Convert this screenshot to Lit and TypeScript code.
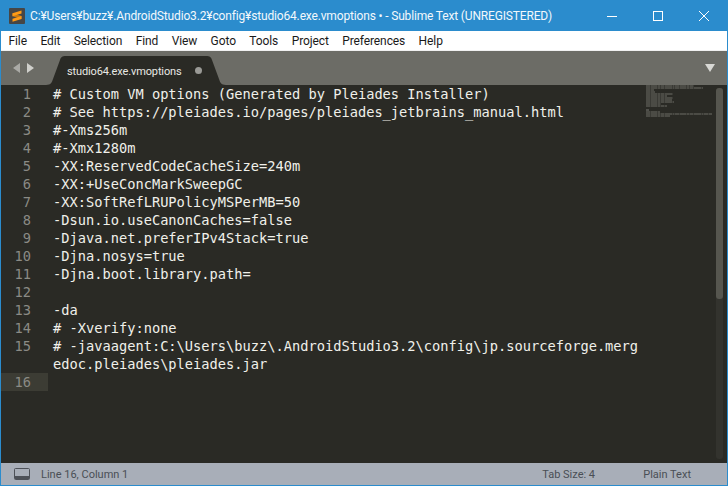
import { LitElement, html, css, svg } from "lit";
import { customElement } from "lit/decorators.js";

const LINES: [string, string[]][] = [
  ["1", ["# Custom VM options (Generated by Pleiades Installer)"]],
  ["2", ["# See https://pleiades.io/pages/pleiades_jetbrains_manual.html"]],
  ["3", ["#-Xms256m"]],
  ["4", ["#-Xmx1280m"]],
  ["5", ["-XX:ReservedCodeCacheSize=240m"]],
  ["6", ["-XX:+UseConcMarkSweepGC"]],
  ["7", ["-XX:SoftRefLRUPolicyMSPerMB=50"]],
  ["8", ["-Dsun.io.useCanonCaches=false"]],
  ["9", ["-Djava.net.preferIPv4Stack=true"]],
  ["10", ["-Djna.nosys=true"]],
  ["11", ["-Djna.boot.library.path="]],
  ["12", [""]],
  ["13", ["-da"]],
  ["14", ["# -Xverify:none"]],
  ["15", ["# -javaagent:C:\\Users\\buzz\\.AndroidStudio3.2\\config\\jp.sourceforge.merg", "edoc.pleiades\\pleiades.jar"]],
  ["16", [""]],
];

const MENU = ["File", "Edit", "Selection", "Find", "View", "Goto", "Tools", "Project", "Preferences", "Help"];

@customElement("app-root")
export class AppRoot extends LitElement {
  static styles = css`
    :host {
      display: block;
      width: 728px;
      height: 486px;
      box-sizing: border-box;
      border: 1px solid #2b8ccd;
      border-top: 0;
      background: #2a2a25;
      font-family: "Roboto", "Open Sans", sans-serif;
      overflow: hidden;
    }
    .frame { display: flex; flex-direction: column; height: 485px; }
    .title {
      height: 31px; flex: none; background: #2b8ccd; color: #f2f8fc;
      display: flex; align-items: center; font-size: 12px; margin: 0 -1px;
      padding-left: 9px; padding-right: 1px; box-sizing: border-box;
    }
    .logo { width: 16px; height: 16px; flex: none; margin-right: 5px; }
    .title-text { flex: 1; white-space: nowrap; letter-spacing: -0.16px; }
    .win { width: 46px; height: 31px; display: flex; align-items: center; justify-content: center; flex: none; }
    .menu {
      height: 19px; flex: none; background: #fff; color: #1a1a1a; font-size: 12px;
      display: flex; align-items: center; padding-left: 7.5px; gap: 13.45px; letter-spacing: -0.1px;
      border-bottom: 1px solid #f0f0f0;
    }
    .tabbar {
      height: 34px; flex: none; background: #6c6c66; display: flex; align-items: flex-end;
      position: relative;
    }
    .nav { position: absolute; left: 12px; top: 12px; }
    .tab {
      margin-left: 45px; width: 180px; height: 29px; position: relative;
      display: flex; align-items: center; color: #e8e8e4; font-size: 11px;
    }
    .tab-shape { position: absolute; inset: 0; }
    .tab-label { position: relative; margin-left: 21px; padding-top: 1px; letter-spacing: -0.13px; }
    .tab-dot { position: absolute; left: 149px; top: 11px; width: 7px; height: 7px; border-radius: 50%; background: #9a9a96; }
    .dropdown { position: absolute; right: 12px; top: 13px; }
    .editor { flex: 1; background: #2a2a25; position: relative; min-height: 0; }
    .row { display: flex; height: 18px; line-height: 18px; }
    .gutter {
      width: 47px; flex: none; box-sizing: border-box; padding-right: 17px; text-align: right;
      color: #8b8b85; font: 13.7px/18px "DejaVu Sans Mono", monospace;
    }
    .code {
      margin-left: 5px; color: #f0f0ea; white-space: pre;
      font: 13.7px/18px "DejaVu Sans Mono", monospace;
    }
    .row.active .gutter { background: #3c3c34; }
    .minimap { position: absolute; left: 644px; top: 0; }
    .sb-track { position: absolute; right: 4px; top: 3px; bottom: 4px; width: 7px; border-radius: 3px; background: #33332e; }
    .sb-thumb { width: 7px; height: 211px; border-radius: 3px; background: #56564f; }
    .status {
      height: 22px; flex: none; background: #a8aeb8; color: #4a4e55; font-size: 11px;
      display: flex; align-items: center; padding-left: 13px;
    }
    .status-icon { margin-right: 11px; flex: none; }
    .grow { flex: 1; }
    .tabsize { width: 101px; flex: none; }
    .syntax { flex: none; white-space: nowrap; margin-right: 36px; }
  `;

  private minimap() {
    const widths = [48, 57, 8, 9, 27, 21, 27, 26, 28, 15, 21, 0, 3, 14, 66, 24];
    const rows = widths.map((w, i) =>
      svg`<path d=${`M1 ${i * 2 + 1}h${w}`} stroke="#92928a" stroke-width="1.2" stroke-dasharray="4 .5 7 .5 2 .5" opacity=${w ? 0.65 : 0}></path>`
    );
    return html`<svg class="minimap" width="70" height="36" aria-hidden="true">${rows}</svg>`;
  }

  render() {
    return html`
      <div class="frame">
        <div class="title">
          <svg class="logo" viewBox="0 0 16 16">
            <rect width="16" height="16" rx="1" fill="#464646"></rect>
            <path d="M3.5 5.2L12.5 8V11L3.5 8.2z" fill="#c97a12"></path>
            <path d="M12.5 2.5v3L3.5 8.2V5.2z" fill="#ff9b16"></path>
            <path d="M12.5 8v3l-9 2.7v-3z" fill="#ff9b16"></path>
          </svg>
          <div class="title-text">C:¥Users¥buzz¥.AndroidStudio3.2¥config¥studio64.exe.vmoptions • - Sublime Text (UNREGISTERED)</div>
          <div class="win">
            <svg width="10" height="10"><path d="M0 5.5h10" stroke="#fff" fill="none"></path></svg>
          </div>
          <div class="win">
            <svg width="10" height="10"><rect x=".5" y=".5" width="9" height="9" stroke="#fff" fill="none"></rect></svg>
          </div>
          <div class="win">
            <svg width="10" height="10"><path d="M0 0l10 10M10 0L0 10" stroke="#fff" fill="none"></path></svg>
          </div>
        </div>
        <div class="menu">${MENU.map((m) => html`<span>${m}</span>`)}</div>
        <div class="tabbar">
          <svg class="nav" width="24" height="10">
            <path d="M0 5l7-5v10z" fill="#aaaaa6"></path>
            <path d="M14 0l7 5-7 5z" fill="#d0d0cc"></path>
          </svg>
          <div class="tab">
            <svg class="tab-shape" width="180" height="29">
              <path d="M0 29C5 29 6 26 7 23L14 4C15 1 16 0 20 0H160C164 0 165 1 166 4L173 23C174 26 175 29 180 29Z" fill="#2a2a25"></path>
            </svg>
            <span class="tab-label">studio64.exe.vmoptions</span>
            <span class="tab-dot"></span>
          </div>
          <svg class="dropdown" width="10" height="8"><path d="M0 0h10L5 8z" fill="#d8d8d4"></path></svg>
        </div>
        <div class="editor">
          ${LINES.map(([n, parts]) => parts.map((p, j) => html`
            <div class="row ${n === "16" ? "active" : ""}">
              <div class="gutter">${j === 0 ? n : ""}</div>
              <div class="code">${p}</div>
            </div>`))}
          ${this.minimap()}
          <div class="sb-track"><div class="sb-thumb"></div></div>
        </div>
        <div class="status">
          <svg class="status-icon" width="16" height="12">
            <rect x=".5" y=".5" width="15" height="11" rx="1" fill="none" stroke="#4d5158"></rect>
            <rect x="1" y="8" width="14" height="3" fill="#4d5158"></rect>
          </svg>
          <span>Line 16, Column 1</span>
          <span class="grow"></span>
          <span class="tabsize">Tab Size: 4</span>
          <span class="syntax">Plain Text</span>
        </div>
      </div>
    `;
  }
}
